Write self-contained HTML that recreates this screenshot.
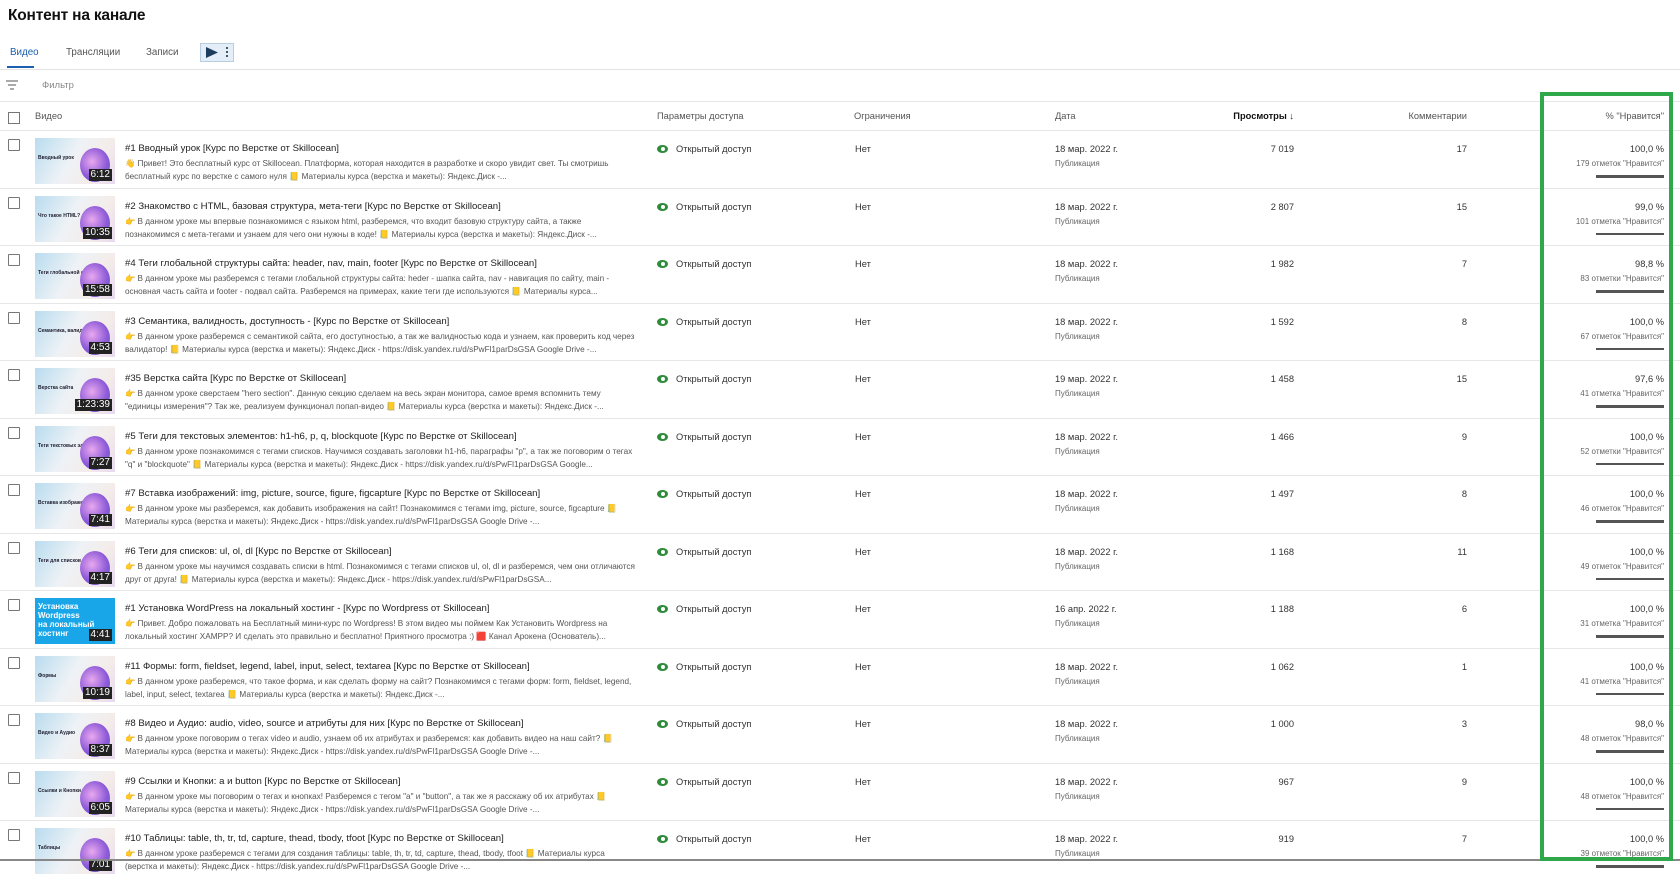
<!DOCTYPE html>
<html><head><meta charset="utf-8"><style>
*{margin:0;padding:0;box-sizing:border-box}
body{width:1680px;height:867px;overflow:hidden;background:#fff;font-family:"Liberation Sans","Noto Sans CJK SC",sans-serif;color:#222;position:relative}
.a{position:absolute;white-space:nowrap}
.row{position:absolute;left:0;width:1680px;height:57.5px;border-bottom:1px solid #e6e6e6}
.cb{position:absolute;left:8px;top:8px;width:12px;height:12px;border:1.5px solid #777;border-radius:1px}
.th{position:absolute;left:35px;top:7px;width:80px;height:46px;background:linear-gradient(120deg,#b9dcef 0%,#eef2f6 45%,#f4ece9 75%,#e6d9ef 100%);overflow:hidden}
.th .blob{position:absolute;right:5px;top:10px;width:30px;height:34px;border-radius:50%;background:radial-gradient(circle at 40% 40%,#e9a8ef,#8e5bd8 55%,#5a4bc7)}
.th .lbl{position:absolute;left:3px;top:17px;font-size:5px;font-weight:bold;color:#223}
.th .d{position:absolute;right:3px;bottom:3px;background:#222;color:#fff;font-size:10px;padding:0 2px;line-height:12px}
.th.blue{background:#19a6e8}
.t{position:absolute;left:125px;top:12px;font-size:9.6px;color:#222}
.ds{position:absolute;left:125px;top:26px;width:510px;font-size:8.2px;line-height:13px;color:#555;white-space:normal;height:26px;overflow:hidden}
.eye{position:absolute;left:657px;top:14px;width:11px;height:8px;border-radius:50%;background:#2e8b3a}
.eye:after{content:"";position:absolute;left:3.5px;top:2px;width:4px;height:4px;border-radius:50%;background:#fff}
.acc{position:absolute;left:676px;top:13px;font-size:9.3px;color:#333}
.no{position:absolute;left:855px;top:13px;font-size:9.3px;color:#333}
.dt{position:absolute;left:1055px;top:13px;font-size:9.3px;color:#333}
.pub{position:absolute;left:1055px;top:28px;font-size:8px;color:#666}
.v{position:absolute;right:386px;top:13px;font-size:9.3px;color:#333}
.c{position:absolute;right:213px;top:13px;font-size:9.3px;color:#333}
.p{position:absolute;right:16px;top:13px;font-size:9.3px;color:#333}
.lk{position:absolute;right:16px;top:28px;font-size:8px;color:#666}
.bar{position:absolute;right:16px;top:44px;width:68px;height:2.5px;background:#555}
.hd{font-size:9.3px;color:#555}
</style></head><body>
<div class="a" style="left:8px;top:7px;font-size:15.5px;color:#111;font-weight:bold;letter-spacing:-0.2px">Контент на канале</div>
<div class="a" style="left:10px;top:47px;font-size:9.8px;color:#1a5fb0">Видео</div>
<div class="a" style="left:7px;top:66px;width:27px;height:2px;background:#1a5fb0"></div>
<div class="a" style="left:66px;top:47px;font-size:9.8px;color:#555">Трансляции</div>
<div class="a" style="left:146px;top:47px;font-size:9.8px;color:#555">Записи</div>
<div class="a" style="left:200px;top:43px;width:34px;height:19px;background:#e3eef8;border:1px solid #b8cde0"></div>
<svg class="a" style="left:205px;top:46px" width="14" height="13"><path d="M1 1L13 6.5L1 12Z" fill="#1d3d5c"/></svg>
<div class="a" style="left:226px;top:47px;width:2px;height:2px;background:#456;box-shadow:0 4px #456,0 8px #456"></div>
<div class="a" style="left:0;top:69px;width:1680px;height:1px;background:#e3e3e3"></div>
<svg class="a" style="left:6px;top:80px" width="12" height="10"><path d="M0 1H12M2 5H10M4 9H8" stroke="#777" stroke-width="1.3"/></svg>
<div class="a" style="left:42px;top:80px;font-size:9.5px;color:#888">Фильтр</div>
<div class="a" style="left:0;top:101px;width:1680px;height:1px;background:#e6e6e6"></div>
<div class="a" style="left:8px;top:112px;width:12px;height:12px;border:1.5px solid #777"></div>
<div class="a hd" style="left:35px;top:111px">Видео</div>
<div class="a hd" style="left:657px;top:111px">Параметры доступа</div>
<div class="a hd" style="left:854px;top:111px">Ограничения</div>
<div class="a hd" style="left:1055px;top:111px">Дата</div>
<div class="a hd" style="right:386px;top:111px;color:#111;font-weight:bold">Просмотры ↓</div>
<div class="a hd" style="right:213px;top:111px">Комментарии</div>
<div class="a hd" style="right:16px;top:111px">% "Нравится"</div>
<div class="a" style="left:0;top:130px;width:1680px;height:1px;background:#e6e6e6"></div>

<div class="row" style="top:131px"><div class="cb"></div><div class="th"><div class="lbl">Вводный урок</div><div class="blob"></div><div class="d">6:12</div></div><div class="t">#1 Вводный урок [Курс по Верстке от Skillocean]</div><div class="ds">👋 Привет! Это бесплатный курс от Skillocean. Платформа, которая находится в разработке и скоро увидит свет. Ты смотришь бесплатный курс по верстке с самого нуля 📒 Материалы курса (верстка и макеты): Яндекс.Диск -...</div><div class="eye"></div><div class="acc">Открытый доступ</div><div class="no">Нет</div><div class="dt">18 мар. 2022 г.</div><div class="pub">Публикация</div><div class="v">7 019</div><div class="c">17</div><div class="p">100,0 %</div><div class="lk">179 отметок "Нравится"</div><div class="bar"></div></div>

<div class="row" style="top:188.5px"><div class="cb"></div><div class="th"><div class="lbl">Что такое HTML?</div><div class="blob"></div><div class="d">10:35</div></div><div class="t">#2 Знакомство с HTML, базовая структура, мета-теги [Курс по Верстке от Skillocean]</div><div class="ds">👉 В данном уроке мы впервые познакомимся с языком html, разберемся, что входит базовую структуру сайта, а также познакомимся с мета-тегами и узнаем для чего они нужны в коде! 📒 Материалы курса (верстка и макеты): Яндекс.Диск -...</div><div class="eye"></div><div class="acc">Открытый доступ</div><div class="no">Нет</div><div class="dt">18 мар. 2022 г.</div><div class="pub">Публикация</div><div class="v">2 807</div><div class="c">15</div><div class="p">99,0 %</div><div class="lk">101 отметка "Нравится"</div><div class="bar"></div></div>

<div class="row" style="top:246px"><div class="cb"></div><div class="th"><div class="lbl">Теги глобальной структуры</div><div class="blob"></div><div class="d">15:58</div></div><div class="t">#4 Теги глобальной структуры сайта: header, nav, main, footer [Курс по Верстке от Skillocean]</div><div class="ds">👉 В данном уроке мы разберемся с тегами глобальной структуры сайта: heder - шапка сайта, nav - навигация по сайту, main - основная часть сайта и footer - подвал сайта. Разберемся на примерах, какие теги где используются 📒 Материалы курса...</div><div class="eye"></div><div class="acc">Открытый доступ</div><div class="no">Нет</div><div class="dt">18 мар. 2022 г.</div><div class="pub">Публикация</div><div class="v">1 982</div><div class="c">7</div><div class="p">98,8 %</div><div class="lk">83 отметки "Нравится"</div><div class="bar"></div></div>

<div class="row" style="top:303.5px"><div class="cb"></div><div class="th"><div class="lbl">Семантика, валидность</div><div class="blob"></div><div class="d">4:53</div></div><div class="t">#3 Семантика, валидность, доступность - [Курс по Верстке от Skillocean]</div><div class="ds">👉 В данном уроке разберемся с семантикой сайта, его доступностью, а так же валидностью кода и узнаем, как проверить код через валидатор! 📒 Материалы курса (верстка и макеты): Яндекс.Диск - https://disk.yandex.ru/d/sPwFl1parDsGSA Google Drive -...</div><div class="eye"></div><div class="acc">Открытый доступ</div><div class="no">Нет</div><div class="dt">18 мар. 2022 г.</div><div class="pub">Публикация</div><div class="v">1 592</div><div class="c">8</div><div class="p">100,0 %</div><div class="lk">67 отметок "Нравится"</div><div class="bar"></div></div>

<div class="row" style="top:361px"><div class="cb"></div><div class="th"><div class="lbl">Верстка сайта</div><div class="blob"></div><div class="d">1:23:39</div></div><div class="t">#35 Верстка сайта [Курс по Верстке от Skillocean]</div><div class="ds">👉 В данном уроке сверстаем "hero section". Данную секцию сделаем на весь экран монитора, самое время вспомнить тему "единицы измерения"? Так же, реализуем функционал попап-видео 📒 Материалы курса (верстка и макеты): Яндекс.Диск -...</div><div class="eye"></div><div class="acc">Открытый доступ</div><div class="no">Нет</div><div class="dt">19 мар. 2022 г.</div><div class="pub">Публикация</div><div class="v">1 458</div><div class="c">15</div><div class="p">97,6 %</div><div class="lk">41 отметка "Нравится"</div><div class="bar"></div></div>

<div class="row" style="top:418.5px"><div class="cb"></div><div class="th"><div class="lbl">Теги текстовых элементов</div><div class="blob"></div><div class="d">7:27</div></div><div class="t">#5 Теги для текстовых элементов: h1-h6, p, q, blockquote [Курс по Верстке от Skillocean]</div><div class="ds">👉 В данном уроке познакомимся с тегами списков. Научимся создавать заголовки h1-h6, параграфы "p", а так же поговорим о тегах "q" и "blockquote" 📒 Материалы курса (верстка и макеты): Яндекс.Диск - https://disk.yandex.ru/d/sPwFl1parDsGSA Google...</div><div class="eye"></div><div class="acc">Открытый доступ</div><div class="no">Нет</div><div class="dt">18 мар. 2022 г.</div><div class="pub">Публикация</div><div class="v">1 466</div><div class="c">9</div><div class="p">100,0 %</div><div class="lk">52 отметки "Нравится"</div><div class="bar"></div></div>

<div class="row" style="top:476px"><div class="cb"></div><div class="th"><div class="lbl">Вставка изображений</div><div class="blob"></div><div class="d">7:41</div></div><div class="t">#7 Вставка изображений: img, picture, source, figure, figcapture [Курс по Верстке от Skillocean]</div><div class="ds">👉 В данном уроке мы разберемся, как добавить изображения на сайт! Познакомимся с тегами img, picture, source, figcapture 📒 Материалы курса (верстка и макеты): Яндекс.Диск - https://disk.yandex.ru/d/sPwFl1parDsGSA Google Drive -...</div><div class="eye"></div><div class="acc">Открытый доступ</div><div class="no">Нет</div><div class="dt">18 мар. 2022 г.</div><div class="pub">Публикация</div><div class="v">1 497</div><div class="c">8</div><div class="p">100,0 %</div><div class="lk">46 отметок "Нравится"</div><div class="bar"></div></div>

<div class="row" style="top:533.5px"><div class="cb"></div><div class="th"><div class="lbl">Теги для списков</div><div class="blob"></div><div class="d">4:17</div></div><div class="t">#6 Теги для списков: ul, ol, dl [Курс по Верстке от Skillocean]</div><div class="ds">👉 В данном уроке мы научимся создавать списки в html. Познакомимся с тегами списков ul, ol, dl и разберемся, чем они отличаются друг от друга! 📒 Материалы курса (верстка и макеты): Яндекс.Диск - https://disk.yandex.ru/d/sPwFl1parDsGSA...</div><div class="eye"></div><div class="acc">Открытый доступ</div><div class="no">Нет</div><div class="dt">18 мар. 2022 г.</div><div class="pub">Публикация</div><div class="v">1 168</div><div class="c">11</div><div class="p">100,0 %</div><div class="lk">49 отметок "Нравится"</div><div class="bar"></div></div>

<div class="row" style="top:591px"><div class="cb"></div><div class="th blue"><div class="lbl" style="top:4px;font-size:8px;color:#fff;line-height:9px">Установка<br>Wordpress<br>на локальный<br>хостинг</div><div class="d">4:41</div></div><div class="t">#1 Установка WordPress на локальный хостинг - [Курс по Wordpress от Skillocean]</div><div class="ds">👉 Привет. Добро пожаловать на Бесплатный мини-курс по Wordpress! В этом видео мы поймем Как Установить Wordpress на локальный хостинг XAMPP? И сделать это правильно и бесплатно! Приятного просмотра :) 🟥 Канал Арокена (Основатель)...</div><div class="eye"></div><div class="acc">Открытый доступ</div><div class="no">Нет</div><div class="dt">16 апр. 2022 г.</div><div class="pub">Публикация</div><div class="v">1 188</div><div class="c">6</div><div class="p">100,0 %</div><div class="lk">31 отметка "Нравится"</div><div class="bar"></div></div>

<div class="row" style="top:648.5px"><div class="cb"></div><div class="th"><div class="lbl">Формы</div><div class="blob"></div><div class="d">10:19</div></div><div class="t">#11 Формы: form, fieldset, legend, label, input, select, textarea [Курс по Верстке от Skillocean]</div><div class="ds">👉 В данном уроке разберемся, что такое форма, и как сделать форму на сайт? Познакомимся с тегами форм: form, fieldset, legend, label, input, select, textarea 📒 Материалы курса (верстка и макеты): Яндекс.Диск -...</div><div class="eye"></div><div class="acc">Открытый доступ</div><div class="no">Нет</div><div class="dt">18 мар. 2022 г.</div><div class="pub">Публикация</div><div class="v">1 062</div><div class="c">1</div><div class="p">100,0 %</div><div class="lk">41 отметка "Нравится"</div><div class="bar"></div></div>

<div class="row" style="top:706px"><div class="cb"></div><div class="th"><div class="lbl">Видео и Аудио</div><div class="blob"></div><div class="d">8:37</div></div><div class="t">#8 Видео и Аудио: audio, video, source и атрибуты для них [Курс по Верстке от Skillocean]</div><div class="ds">👉 В данном уроке поговорим о тегах video и audio, узнаем об их атрибутах и разберемся: как добавить видео на наш сайт? 📒 Материалы курса (верстка и макеты): Яндекс.Диск - https://disk.yandex.ru/d/sPwFl1parDsGSA Google Drive -...</div><div class="eye"></div><div class="acc">Открытый доступ</div><div class="no">Нет</div><div class="dt">18 мар. 2022 г.</div><div class="pub">Публикация</div><div class="v">1 000</div><div class="c">3</div><div class="p">98,0 %</div><div class="lk">48 отметок "Нравится"</div><div class="bar"></div></div>

<div class="row" style="top:763.5px"><div class="cb"></div><div class="th"><div class="lbl">Ссылки и Кнопки</div><div class="blob"></div><div class="d">6:05</div></div><div class="t">#9 Ссылки и Кнопки: a и button [Курс по Верстке от Skillocean]</div><div class="ds">👉 В данном уроке мы поговорим о тегах и кнопках! Разберемся с тегом "a" и "button", а так же я расскажу об их атрибутах 📒 Материалы курса (верстка и макеты): Яндекс.Диск - https://disk.yandex.ru/d/sPwFl1parDsGSA Google Drive -...</div><div class="eye"></div><div class="acc">Открытый доступ</div><div class="no">Нет</div><div class="dt">18 мар. 2022 г.</div><div class="pub">Публикация</div><div class="v">967</div><div class="c">9</div><div class="p">100,0 %</div><div class="lk">48 отметок "Нравится"</div><div class="bar"></div></div>

<div class="row" style="top:821px;border-bottom:none"><div class="cb"></div><div class="th"><div class="lbl">Таблицы</div><div class="blob"></div><div class="d">7:01</div></div><div class="t">#10 Таблицы: table, th, tr, td, capture, thead, tbody, tfoot [Курс по Верстке от Skillocean]</div><div class="ds">👉 В данном уроке разберемся с тегами для создания таблицы: table, th, tr, td, capture, thead, tbody, tfoot 📒 Материалы курса (верстка и макеты): Яндекс.Диск - https://disk.yandex.ru/d/sPwFl1parDsGSA Google Drive -...</div><div class="eye"></div><div class="acc">Открытый доступ</div><div class="no">Нет</div><div class="dt">18 мар. 2022 г.</div><div class="pub">Публикация</div><div class="v">919</div><div class="c">7</div><div class="p">100,0 %</div><div class="lk">39 отметок "Нравится"</div><div class="bar"></div></div>

<div class="a" style="left:0;top:859px;width:1680px;height:2px;background:#888"></div>
<div class="a" style="left:1540px;top:92px;width:133px;height:769px;border:4px solid #2ea84a"></div>
</body></html>
